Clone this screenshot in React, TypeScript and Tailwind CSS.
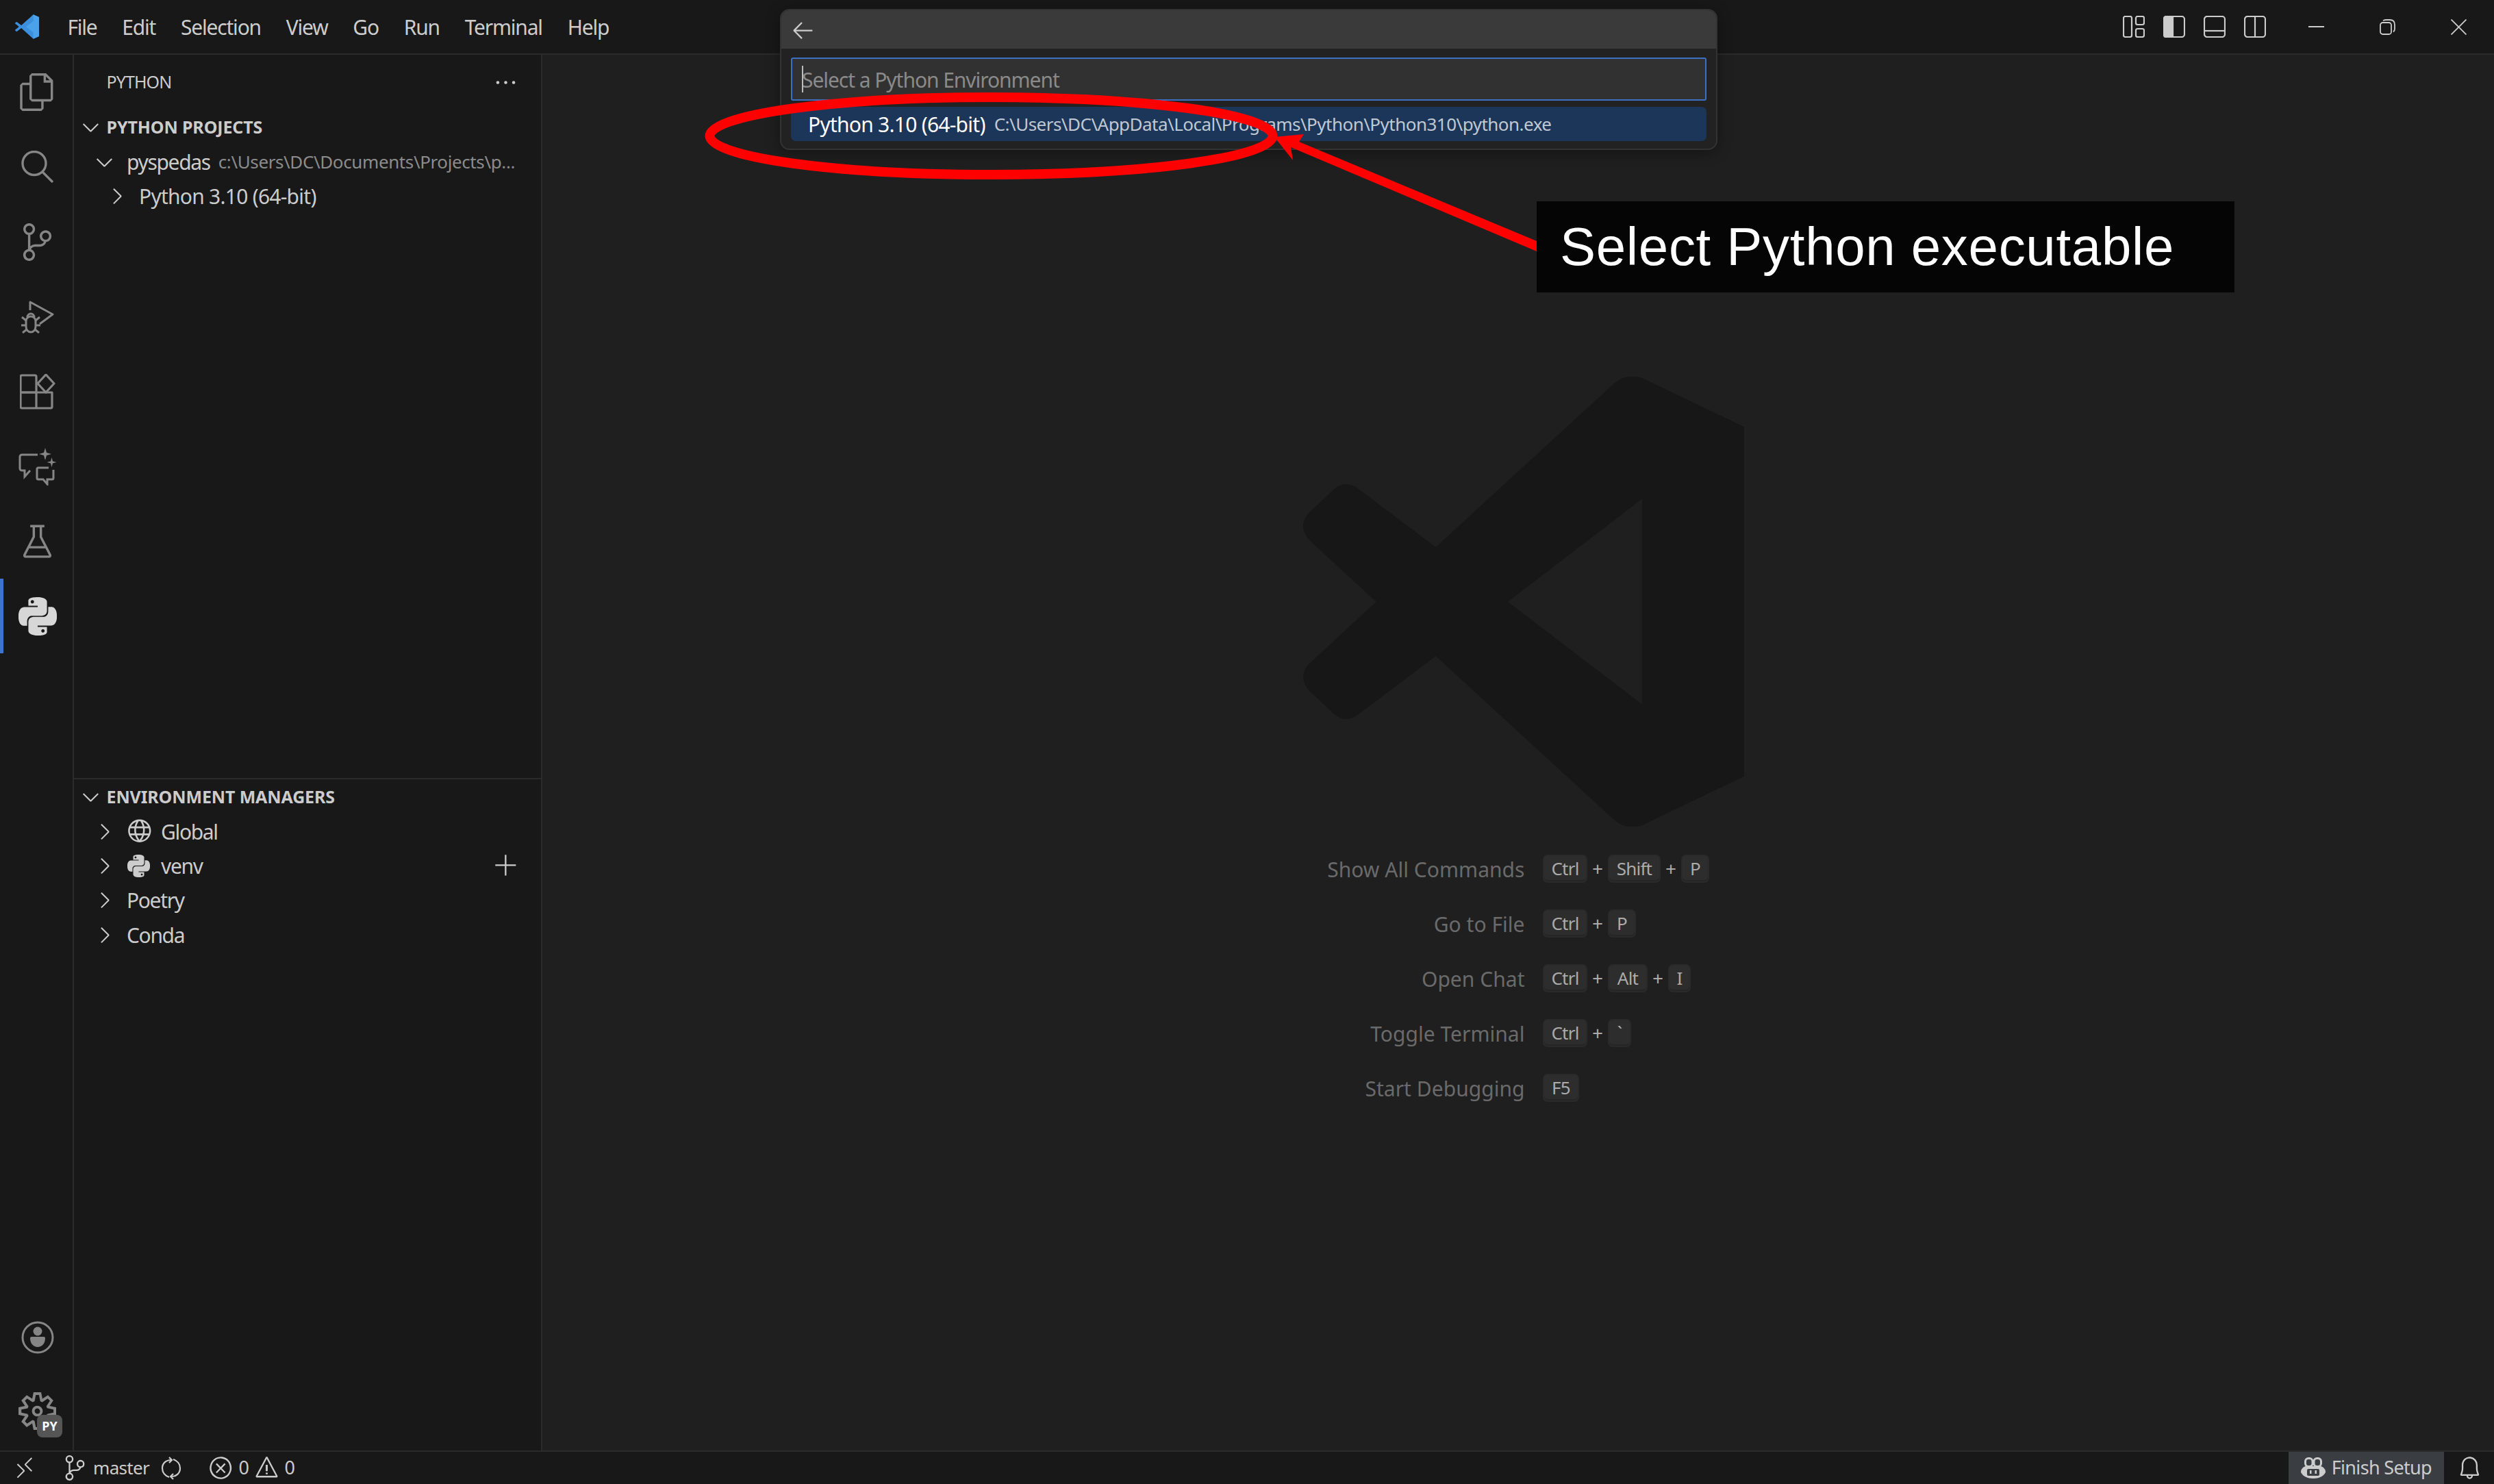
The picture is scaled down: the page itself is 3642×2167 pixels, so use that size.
import type { ReactNode } from 'react';
import {
  VscAdd,
  VscArrowLeft,
  VscBeaker,
  VscBell,
  VscChevronDown,
  VscChevronRight,
  VscEllipsis,
  VscError,
  VscFiles,
  VscGlobe,
  VscRemote,
  VscSettingsGear,
  VscSourceControl,
  VscWarning,
} from 'react-icons/vsc';
import { SiPython } from 'react-icons/si';

const MENU = ['File', 'Edit', 'Selection', 'View', 'Go', 'Run', 'Terminal', 'Help'];

const VsLogo = () => (
  <svg viewBox="0 0 100 100" className="h-[38px] w-[39px]">
    <path d="M74 3 L96 13 V87 L74 97 L28 55 L10 69 L3 63 L19 50 L3 37 L10 31 L28 45 Z" fill="#3b8fdc" />
    <path d="M74 3 L96 13 V87 L74 97 Z M74 28 L46 50 L74 72 Z" fill="#4aa3ea" />
  </svg>
);

const SearchIcon = () => (
  <svg viewBox="0 0 47 47" className="h-[47px] w-[47px]" fill="none" stroke="#868686" strokeWidth="3.4">
    <circle cx="19" cy="18.5" r="17" />
    <path d="M31 31 L46 46" />
  </svg>
);

const DebugIcon = () => (
  <svg viewBox="0 0 48 48" className="h-[48px] w-[48px]" fill="none" stroke="#868686" strokeWidth="3" strokeLinejoin="round">
    <path d="M13 14 V2 L46 20 L27 34" />
    <path d="M7 30 a7 7 0 0 1 14 0 V38 a7 8 0 0 1 -14 0 Z" />
    <path d="M9 24 a5 5 0 0 1 10 0" />
    <path d="M1 24 L7 29 M27 24 L21 29 M0 36 H7 M28 36 H21 M2 47 L8 42 M26 47 L20 42" />
  </svg>
);

const ExtensionsIcon = () => (
  <svg viewBox="0 0 52 52" className="h-[52px] w-[52px]" fill="none" stroke="#868686" strokeWidth="3.2" strokeLinejoin="round">
    <path d="M24 27 V4 a2 2 0 0 0 -2 -2 H3 a2 2 0 0 0 -2 2 V27 Z" />
    <path d="M1 27 H47 V48 a2 2 0 0 1 -2 2 H3 a2 2 0 0 1 -2 -2 Z M24 27 V50" />
    <path d="M38 1 L50 14 L38 27 L26 14 Z" />
  </svg>
);

const ChatSparkleIcon = () => (
  <svg viewBox="0 0 56 55" className="h-[55px] w-[56px]" fill="none" stroke="#868686" strokeWidth="3">
    <path d="M28 10 H5 a3 3 0 0 0 -3 3 V30 a3 3 0 0 0 3 3 h4 v9 l8 -9" />
    <path d="M44 29 H29 a2 2 0 0 0 -2 2 V44 a2 2 0 0 0 2 2 h7 l6 7 v-7 h7 a2 2 0 0 0 2 -2 V32" />
    <path d="M39 0 L41 7 L48 9 L41 11 L39 18 L37 11 L30 9 L37 7 Z M48.5 14 L50 19.5 L55.5 21 L50 22.5 L48.5 28 L47 22.5 L41.5 21 L47 19.5 Z" fill="#868686" stroke="none" />
  </svg>
);

const AccountIcon = () => (
  <svg viewBox="0 0 48 48" className="h-[48px] w-[48px]" fill="#868686">
    <circle cx="24" cy="24" r="22" fill="none" stroke="#868686" strokeWidth="3" />
    <circle cx="24" cy="15" r="6.5" />
    <path d="M13 25 a2 2 0 0 1 2 -2 h18 a2 2 0 0 1 2 2 c0 8 -5 13 -11 13 s-11 -5 -11 -13 z" />
  </svg>
);

const SyncIcon = () => (
  <svg viewBox="0 0 30 34" className="ml-[17px] h-[34px] w-[30px]" fill="none" stroke="#cccccc" strokeWidth="2.2">
    <path d="M15 5 C7 5 2 10 2 17 C2 23 6 28 12 30" />
    <path d="M12 1 L16 5 L12 9" />
    <path d="M15 29 C23 29 28 24 28 17 C28 11 24 6 18 4" />
    <path d="M18 25 L14 29 L18 33" />
  </svg>
);

const CopilotIcon = () => (
  <svg viewBox="0 0 36 31" className="h-[31px] w-[36px]" fill="#cccccc">
    <path d="M7 13 C1 15 0 19 0 22 C3 28 10 31 18 31 C26 31 33 28 36 22 C36 19 35 15 29 13 Z" />
    <rect x="6.5" y="1.5" width="10.5" height="12" rx="4.5" fill="#3a3d41" stroke="#cccccc" strokeWidth="3" />
    <rect x="19" y="1.5" width="10.5" height="12" rx="4.5" fill="#3a3d41" stroke="#cccccc" strokeWidth="3" />
    <rect x="9" y="17" width="18" height="10" rx="2" fill="#3a3d41" />
    <rect x="13" y="19" width="2.5" height="5" />
    <rect x="20.5" y="19" width="2.5" height="5" />
  </svg>
);

const VsWatermark = () => (
  <svg viewBox="110 105 1347 1373" className="ml-[16px] h-[657px] w-[644px] shrink-0" fill="#171717" fillRule="evenodd">
    <path d="M1060 125 Q1110 85 1165 118 L1457 258 V1325 L1165 1465 Q1110 1498 1060 1458 L515 958 L280 1135 Q240 1165 205 1135 L130 1065 Q90 1020 130 980 L333 792 L130 605 Q90 560 130 518 L205 448 Q240 418 280 448 L515 625 Z M1145 478 L735 792 L1145 1105 Z" />
  </svg>
);

const ActivityCell = ({ children }: { children: ReactNode }) => (
  <div className="flex h-[109.3px] items-center justify-center pl-[3px]">{children}</div>
);

const ActivityBar = () => (
  <div className="flex w-[108px] shrink-0 flex-col border-r-2 border-[#2b2b2b] text-[#868686]">
    <ActivityCell><VscFiles size={55} /></ActivityCell>
    <ActivityCell><SearchIcon /></ActivityCell>
    <ActivityCell><VscSourceControl size={55} /></ActivityCell>
    <ActivityCell><DebugIcon /></ActivityCell>
    <ActivityCell><ExtensionsIcon /></ActivityCell>
    <ActivityCell><ChatSparkleIcon /></ActivityCell>
    <ActivityCell><VscBeaker size={55} /></ActivityCell>
    <div className="flex h-[109.3px] items-center justify-center border-l-[5px] border-[#3d74d0] pr-[2px] text-[#d7d7d7]">
      <SiPython size={56} />
    </div>
    <div className="mt-auto flex h-[107px] items-center justify-center pl-[3px]">
      <AccountIcon />
    </div>
    <div className="relative mb-[3px] flex h-[109px] items-center justify-center pl-[3px]">
      <VscSettingsGear size={55} />
      <span className="absolute left-[54px] top-[60px] flex h-[33px] w-[37px] items-center justify-center rounded-[8px] bg-[#555555] text-[18px] font-bold text-white">
        PY
      </span>
    </div>
  </div>
);

const SectionHeader = ({ title }: { title: string }) => (
  <div className="flex h-[51px] items-center pl-[5.5px] text-[25px] font-bold tracking-[-0.005em] text-[#cccccc]">
    <VscChevronDown size={37} />
    <span className="ml-[5px]">{title}</span>
  </div>
);

const ManagerRow = ({ icon, label, action }: { icon?: ReactNode; label: string; action?: ReactNode }) => (
  <div className="flex h-[50.3px] items-center pl-[25.5px] pr-[32.5px] tracking-[-0.045em] text-[#cccccc]">
    <VscChevronRight size={37} />
    {icon ? <span className="ml-[15.5px] flex w-[33px] justify-center">{icon}</span> : null}
    <span className={icon ? 'ml-[16px]' : 'ml-[14.5px]'}>{label}</span>
    {action ? <span className="ml-auto">{action}</span> : null}
  </div>
);

const Sidebar = () => (
  <div className="flex w-[684px] shrink-0 flex-col border-r-2 border-[#2b2b2b] text-[30px] tracking-[-0.03em]">
    <div className="flex h-[80px] items-center justify-between pl-[47.5px] pr-[33px] text-[25px] text-[#cccccc]">
      <span>PYTHON</span>
      <VscEllipsis size={37} />
    </div>
    <div className="h-[978px] border-b-2 border-[#2b2b2b]">
      <SectionHeader title="PYTHON PROJECTS" />
      <div className="flex h-[50px] items-center pl-[25.5px] text-[#cccccc]">
        <VscChevronDown size={37} />
        <span className="ml-[14.5px] tracking-[-0.045em]">pyspedas</span>
        <span className="ml-[12px] text-[26px] tracking-[-0.015em] text-[#8b8b8b]">c:\Users\DC\Documents\Projects\p...</span>
      </div>
      <div className="flex h-[50px] items-center pl-[43.5px] text-[#cccccc]">
        <VscChevronRight size={37} />
        <span className="ml-[14.5px] tracking-[-0.025em]">Python 3.10 (64-bit)</span>
      </div>
    </div>
    <SectionHeader title="ENVIRONMENT MANAGERS" />
    <ManagerRow icon={<VscGlobe size={41} className="shrink-0" />} label="Global" />
    <ManagerRow icon={<SiPython size={33} />} label="venv" action={<VscAdd size={37} />} />
    <ManagerRow label="Poetry" />
    <ManagerRow label="Conda" />
  </div>
);

const Key = ({ label, className }: { label: string; className: string }) => (
  <span className={`flex h-[41px] items-center justify-center rounded-[7px] border-2 border-[#2a2a2a] bg-[#2d2d2d] text-[26px] tracking-[-0.03em] text-[#ababab] shadow-[inset_0_-2px_0_#262626] ${className}`}>
    {label}
  </span>
);

const Plus = ({ className }: { className: string }) => (
  <span className={`text-center text-[28px] leading-[41px] text-[#ababab] ${className}`}>+</span>
);

const Shortcut = ({ label, children }: { label: string; children: ReactNode }) => (
  <div className="flex h-[41px] items-center">
    <span className="w-[300px] pt-[2px] text-right text-[30px] tracking-[0.001em] text-[#6a6a6a]">{label}</span>
    <div className="ml-[26.5px] flex items-center">{children}</div>
  </div>
);

const Editor = () => (
  <div className="flex min-w-0 flex-1 flex-col items-center bg-[#1f1f1f] pt-[470px]">
    <VsWatermark />
    <div className="ml-[1134.5px] mt-[41px] flex flex-col gap-y-[39px] self-start">
      <Shortcut label="Show All Commands">
        <Key label="Ctrl" className="w-[65px]" />
        <Plus className="w-[30px]" />
        <Key label="Shift" className="w-[77px]" />
        <Plus className="w-[30px]" />
        <Key label="P" className="w-[41px]" />
      </Shortcut>
      <Shortcut label="Go to File">
        <Key label="Ctrl" className="w-[65px]" />
        <Plus className="w-[30px]" />
        <Key label="P" className="w-[41px]" />
      </Shortcut>
      <Shortcut label="Open Chat">
        <Key label="Ctrl" className="w-[65px]" />
        <Plus className="w-[30px]" />
        <Key label="Alt" className="w-[58px]" />
        <Plus className="w-[30px]" />
        <Key label="I" className="w-[33px]" />
      </Shortcut>
      <Shortcut label="Toggle Terminal">
        <Key label="Ctrl" className="w-[65px]" />
        <Plus className="w-[30px]" />
        <Key label="`" className="w-[34px]" />
      </Shortcut>
      <Shortcut label="Start Debugging">
        <Key label="F5" className="w-[53px]" />
      </Shortcut>
    </div>
  </div>
);

const LayoutIcons = () => (
  <div className="flex gap-[27px]">
    <svg viewBox="0 0 32 32" className="h-[32px] w-[32px]" fill="none" stroke="#cccccc" strokeWidth="2.2">
      <rect x="1" y="1" width="12" height="30" rx="2.5" />
      <rect x="19" y="1" width="12" height="12" rx="2.5" />
      <rect x="19" y="19" width="12" height="12" rx="2.5" />
    </svg>
    <svg viewBox="0 0 32 32" className="h-[32px] w-[32px]" fill="none" stroke="#cccccc" strokeWidth="2.2">
      <path d="M14 1 H4 a3 3 0 0 0 -3 3 V28 a3 3 0 0 0 3 3 H14 Z" fill="#cccccc" />
      <rect x="1" y="1" width="30" height="30" rx="4" />
    </svg>
    <svg viewBox="0 0 32 32" className="h-[32px] w-[32px]" fill="none" stroke="#cccccc" strokeWidth="2.2">
      <rect x="1" y="1" width="30" height="30" rx="4" />
      <path d="M1 22 H31" />
    </svg>
    <svg viewBox="0 0 32 32" className="h-[32px] w-[32px]" fill="none" stroke="#cccccc" strokeWidth="2.2">
      <rect x="1" y="1" width="30" height="30" rx="4" />
      <path d="M16 1 V31" />
    </svg>
  </div>
);

const WindowControls = () => (
  <div className="ml-[21px] flex">
    <div className="flex h-[78px] w-[104px] items-center justify-center">
      <span className="h-[2px] w-[23px] bg-[#cccccc]" />
    </div>
    <div className="flex h-[78px] w-[104px] items-center justify-center">
      <svg viewBox="0 0 23 23" className="h-[23px] w-[23px]" fill="none" stroke="#cccccc" strokeWidth="1.8">
        <rect x="1" y="5" width="16" height="17" rx="3.5" />
        <path d="M5 2.2 Q7 1 10 1 H15 Q22 1 22 8 V14 Q22 17 20 18.5" />
      </svg>
    </div>
    <div className="flex h-[78px] w-[104px] items-center justify-center">
      <svg viewBox="0 0 23 23" className="h-[23px] w-[23px]" fill="none" stroke="#cccccc" strokeWidth="1.8">
        <path d="M0.5 0.5 L22.5 22.5 M22.5 0.5 L0.5 22.5" />
      </svg>
    </div>
  </div>
);

const TitleBar = () => (
  <div className="flex h-[80px] shrink-0 items-center border-b-2 border-[#2b2b2b] pl-[20px] text-[30px] tracking-[-0.04em] text-[#cccccc]">
    <VsLogo />
    <div className="ml-[21px] flex">
      {MENU.map((item) => (
        <span key={item} className="px-[18.4px]">{item}</span>
      ))}
    </div>
    <div className="ml-auto flex items-center">
      <LayoutIcons />
      <WindowControls />
    </div>
  </div>
);

const StatusBar = () => (
  <div className="flex h-[49px] shrink-0 items-center border-t-2 border-[#2b2b2b] pl-[18px] pr-[17.5px] text-[27px] tracking-[-0.025em] text-[#cccccc]">
    <VscRemote size={36} />
    <VscSourceControl size={37} className="ml-[36.5px]" />
    <span className="ml-[8.5px] text-[26px]">master</span>
    <SyncIcon />
    <VscError size={37} className="ml-[39px]" />
    <span className="ml-[7.5px]">0</span>
    <VscWarning size={37} className="ml-[7.5px]" />
    <span className="ml-[7.5px]">0</span>
    <div className="ml-auto flex h-full items-center gap-[9px] bg-[#3a3d41] pl-[18px] pr-[18px]">
      <CopilotIcon />
      <span>Finish Setup</span>
    </div>
    <VscBell size={37} className="ml-[18.5px]" />
  </div>
);

const QuickPick = () => (
  <div className="absolute left-[1139px] top-[13px] flex h-[206px] w-[1369px] flex-col overflow-hidden rounded-[14px] border-2 border-[#333333] bg-[#222222] shadow-[0_4px_20px_rgba(0,0,0,0.36)]">
    <div className="flex h-[56px] shrink-0 items-center bg-[#3a3a3a] pl-[13px] text-[#cccccc]">
      <VscArrowLeft size={37} />
    </div>
    <div className="relative mx-[14px] mt-[13px] flex h-[63px] shrink-0 items-center rounded-[3px] border-2 border-[#3d6fc2] bg-[#313131] pl-[14px] pt-[1px] text-[30px] tracking-[-0.035em] text-[#8a8a8a]">
      <span className="absolute left-[14px] top-[10px] h-[39px] w-[2px] bg-[#bdbdbd]" />
      Select a Python Environment
    </div>
    <div className="mx-[14px] mt-[9px] flex h-[50px] shrink-0 items-center rounded-[7px] bg-[#1b3659] pl-[25px] text-white">
      <span className="text-[30px] tracking-[-0.025em]">Python 3.10 (64-bit)</span>
      <span className="ml-[13px] text-[26px] tracking-[-0.02em] text-[#c0c8d2]">C:\Users\DC\AppData\Local\Programs\Python\Python310\python.exe</span>
    </div>
  </div>
);

const Annotation = () => (
  <>
    <svg className="pointer-events-none absolute inset-0 h-full w-full" viewBox="0 0 3642 2167">
      <ellipse cx="1447.5" cy="198.5" rx="411" ry="56.5" fill="none" stroke="#ff0000" strokeWidth="14" />
      <path d="M1861 200 L1904 196 L1897 207 L2244 352 V367 L1885 215 L1888 234 Z" fill="#ff0000" />
    </svg>
    <div className="absolute left-[2244px] top-[294px] flex h-[133px] w-[1019px] items-center bg-[#050505] pl-[34px] font-['Liberation_Sans',sans-serif] text-[78px] tracking-[0.009em] text-white">
      Select Python executable
    </div>
  </>
);

export default function App() {
  return (
    <div className="relative flex h-screen w-screen flex-col overflow-hidden bg-[#181818] font-['Noto_Sans',sans-serif]">
      <TitleBar />
      <div className="flex min-h-0 flex-1">
        <ActivityBar />
        <Sidebar />
        <Editor />
      </div>
      <StatusBar />
      <QuickPick />
      <Annotation />
    </div>
  );
}
